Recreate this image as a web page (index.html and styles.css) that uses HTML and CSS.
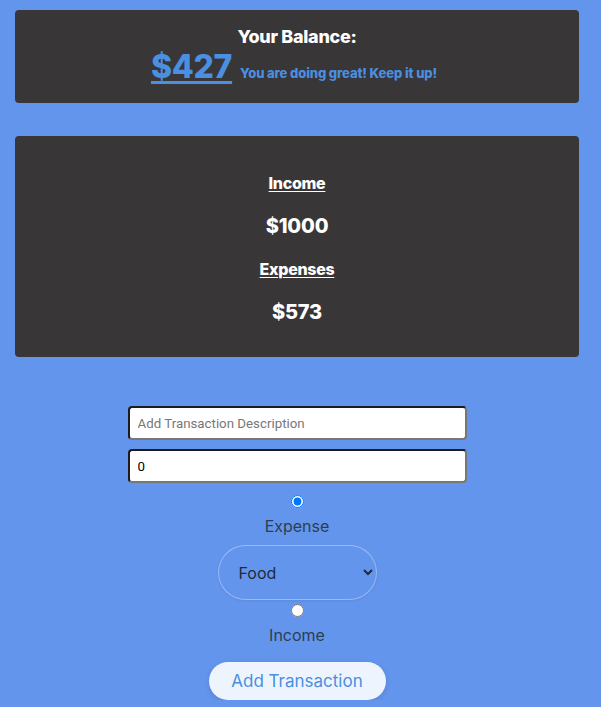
FILE: index.html
```html
<!DOCTYPE html>
<html>
<head>
<meta charset="utf-8">
<link rel="stylesheet" href="styles.css">
</head>
<body>
<div class="page">
  <section class="card balance">
    <h2 class="balance-title">Your Balance:</h2>
    <div class="balance-row">
      <span class="amount">$427</span>
      <span class="note">You are doing great! Keep it up!</span>
    </div>
  </section>
  <section class="card summary">
    <h3 class="sum-label">Income</h3>
    <p class="sum-value">$1000</p>
    <h3 class="sum-label">Expenses</h3>
    <p class="sum-value">$573</p>
  </section>
  <form class="form">
    <input class="field" type="text" placeholder="Add Transaction Description">
    <input class="field" type="text" value="0">
    <input class="radio" type="radio" name="kind" checked>
    <label class="radio-label">Expense</label>
    <select class="category">
      <option>Food</option>
    </select>
    <input class="radio radio2" type="radio" name="kind">
    <label class="radio-label">Income</label>
    <button class="add" type="button">Add Transaction</button>
  </form>
</div>
</body>
</html>
```
FILE: styles.css
```css
html, body {
  margin: 0;
  padding: 0;
  background: #6495ed;
}
body {
  font-family: Inter, "Noto Sans", sans-serif;
}
.page {
  padding: 10px 22px 0 15px;
  display: flex;
  flex-direction: column;
}
.card {
  background: #383637;
  border-radius: 4px;
  color: #fff;
  text-align: center;
}
.balance {
  height: 93px;
  box-sizing: border-box;
  padding-top: 16px;
}
.balance-title {
  margin: 0;
  font-size: 18px;
  font-weight: 800;
  line-height: 22px;
  letter-spacing: -0.3px;
}
.balance-row {
  display: flex;
  justify-content: center;
  align-items: baseline;
  gap: 8px;
  margin-top: 1px;
  margin-left: -6px;
}
.amount {
  font-size: 32px;
  font-weight: 800;
  color: #4a8fe0;
  text-decoration: underline;
  text-decoration-thickness: 3px;
  text-underline-offset: 3px;
  line-height: 36px;
  letter-spacing: -0.3px;
}
.note {
  font-size: 13px;
  font-weight: 800;
  color: #4a8fe0;
  letter-spacing: -0.1px;
}
.summary {
  margin-top: 33px;
  height: 221px;
  box-sizing: border-box;
  padding-top: 37px;
}
.sum-label {
  margin: 0;
  font-size: 16px;
  font-weight: 800;
  line-height: 20px;
  letter-spacing: -0.3px;
  text-decoration: underline;
  text-underline-offset: 2px;
}
.sum-value {
  margin: 22px 0 22px;
  font-size: 20px;
  font-weight: 800;
  line-height: 22px;
  letter-spacing: -0.2px;
}
.form {
  margin-top: 49px;
  display: flex;
  flex-direction: column;
  align-items: center;
}
.field {
  width: 339px;
  height: 34px;
  box-sizing: border-box;
  margin: 0 0 9px;
  border: 2px solid;
  border-color: #1c1c1c #777 #777 #1c1c1c;
  border-radius: 4px;
  background: #fff;
  padding: 0 8px;
  font-family: Roboto, "Liberation Sans", sans-serif;
  font-size: 13.3px;
  color: #000;
}
.field::placeholder {
  color: #777;
}
.radio {
  margin: 3px 0 0;
  width: 13px;
  height: 13px;
}
.radio-label {
  font-size: 16px;
  color: #2c3e50;
  line-height: 20px;
  margin-top: 8px;
}
.category {
  margin-top: 9px;
  width: 159px;
  height: 55px;
  border-radius: 28px;
  border: 1px solid rgba(255,255,255,0.35);
  background: #6495ed;
  color: #1d2b3d;
  font-family: Inter, sans-serif;
  font-size: 16px;
  padding: 0 8px 0 16px;
  box-shadow: 0 1px 3px rgba(0,0,0,0.08);
}
.radio2 {
  margin-top: 4px;
}
.add {
  margin-top: 17px;
  width: 177px;
  height: 38px;
  border: none;
  border-radius: 19px;
  background: #eef4fd;
  color: #4a8fe0;
  font-family: Inter, sans-serif;
  font-size: 17px;
  box-shadow: 0 2px 6px rgba(0,0,0,0.12);
}
```
